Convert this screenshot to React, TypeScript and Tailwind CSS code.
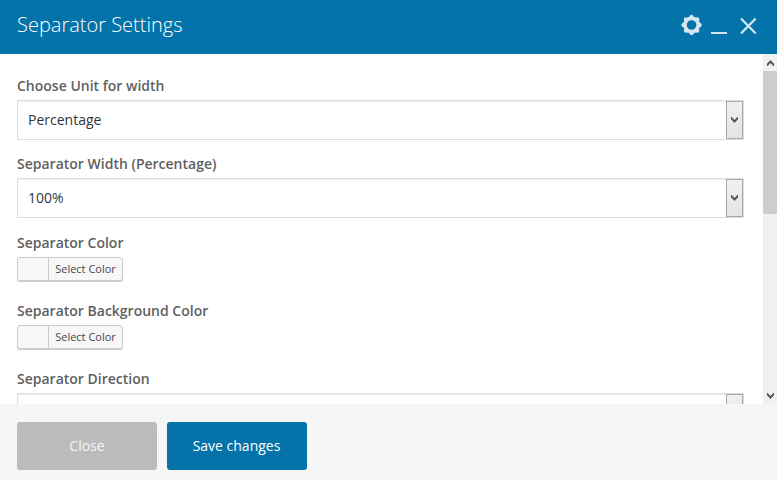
function Label({ children }: { children: string }) {
  return (
    <div className="h-5 text-[14px] leading-5 font-semibold text-[#5f5f5f] whitespace-nowrap">{children}</div>
  );
}

function Chevron({ up = false }: { up?: boolean }) {
  return (
    <svg width="7" height="6" viewBox="0 0 7 6" className={up ? "rotate-180" : ""}>
      <path d="M0 0 L0.7 0 L3.5 3 L6.3 0 L7 0 V2.2 L3.5 5.9 L0 2.2 Z" fill="#555" />
    </svg>
  );
}

function Select({ value }: { value: string }) {
  return (
    <div className="mt-1 flex h-10 w-[727px] shrink-0 border border-[#dddddd] bg-white shadow-[inset_0_1px_2px_rgba(0,0,0,0.07)]">
      <div className="flex-1 pl-[10px] text-[14px] leading-[38px] text-[#32373c]">{value}</div>
      <div className="flex w-[17px] items-center justify-center border border-[#a9a9a9] bg-linear-to-b from-[#f0f0f0] to-[#e4e4e4]">
        <Chevron />
      </div>
    </div>
  );
}

function ColorButton() {
  return (
    <div className="mt-1 flex h-6 w-[106px] shrink-0 rounded-[3px] border border-[#cccccc] bg-[#f7f7f7] shadow-[0_1px_0_#cccccc]">
      <div className="w-[30px]" />
      <div className="flex-1 rounded-r-[2px] border-l border-[#cccccc] text-center text-[11px] leading-[22px] text-[#484848]">
        Select Color
      </div>
    </div>
  );
}

function Gear() {
  const teeth = Array.from({ length: 8 }, (_, i) => i * 45);
  return (
    <svg width="22" height="22" viewBox="-10.6 -11 22 22" fill="#d3e6f0">
      <circle r="6.6" fill="none" stroke="#d3e6f0" strokeWidth="3.6" />
      {teeth.map((a) => (
        <path key={a} transform={`rotate(${a})`} d="M-3.2 -7.4 Q-2 -8.2 -1.5 -9.6 Q0 -10.9 1.5 -9.6 Q2 -8.2 3.2 -7.4 Z" />
      ))}
    </svg>
  );
}

export default function App() {
  return (
    <div className="flex h-[480px] w-[777px] flex-col overflow-hidden bg-white font-['Open_Sans',sans-serif]">
      <header className="flex h-[54px] shrink-0 items-start bg-[#0473aa] pl-[17px]">
        <h1 className="flex-1 pt-[10px] text-[20px] leading-[30px] font-light text-white">Separator Settings</h1>
        <div className="flex pr-5">
          <div className="mt-[14px]">
            <Gear />
          </div>
          <div className="mt-8 ml-2 h-[2px] w-4 bg-[#d3e6f0]" />
          <svg className="mt-[18px] ml-[13px]" width="17" height="17" viewBox="0 0 17 17">
            <path d="M1.7 1.2 L15 14.8 M15 1.2 L1.7 14.8" stroke="#d3e6f0" strokeWidth="2.3" strokeLinecap="round" />
          </svg>
        </div>
      </header>
      <main className="flex h-[350px] shrink-0 overflow-hidden">
        <div className="flex-1 pt-[22px] pl-[17px]">
          <Label>Choose Unit for width</Label>
          <Select value="Percentage" />
          <div className="mt-[14px]">
            <Label>Separator Width (Percentage)</Label>
            <Select value="100%" />
          </div>
          <div className="mt-[15px]">
            <Label>Separator Color</Label>
            <ColorButton />
          </div>
          <div className="mt-5">
            <Label>Separator Background Color</Label>
            <ColorButton />
          </div>
          <div className="mt-5">
            <Label>Separator Direction</Label>
            <Select value="" />
          </div>
        </div>
        <div className="flex w-[14px] flex-col bg-[#f0f0f0]">
          <div className="flex h-[17px] justify-center pt-[6px] pl-px">
            <Chevron up />
          </div>
          <div className="h-[143px] bg-[#cdcdcd]" />
          <div className="flex-1" />
          <div className="flex h-[17px] justify-center pt-[6px] pl-px">
            <Chevron />
          </div>
        </div>
      </main>
      <footer className="flex flex-1 gap-[10px] bg-[#f6f6f6] pt-[18px] pl-[17px]">
        <button className="h-12 w-[140px] rounded-[3px] bg-[#bbbbbb] pb-[2px] text-[14px] text-[#f5f5f5]">Close</button>
        <button className="h-12 w-[140px] rounded-[3px] bg-[#0473aa] pr-px pb-[2px] text-[14px] text-white">Save changes</button>
      </footer>
    </div>
  );
}
